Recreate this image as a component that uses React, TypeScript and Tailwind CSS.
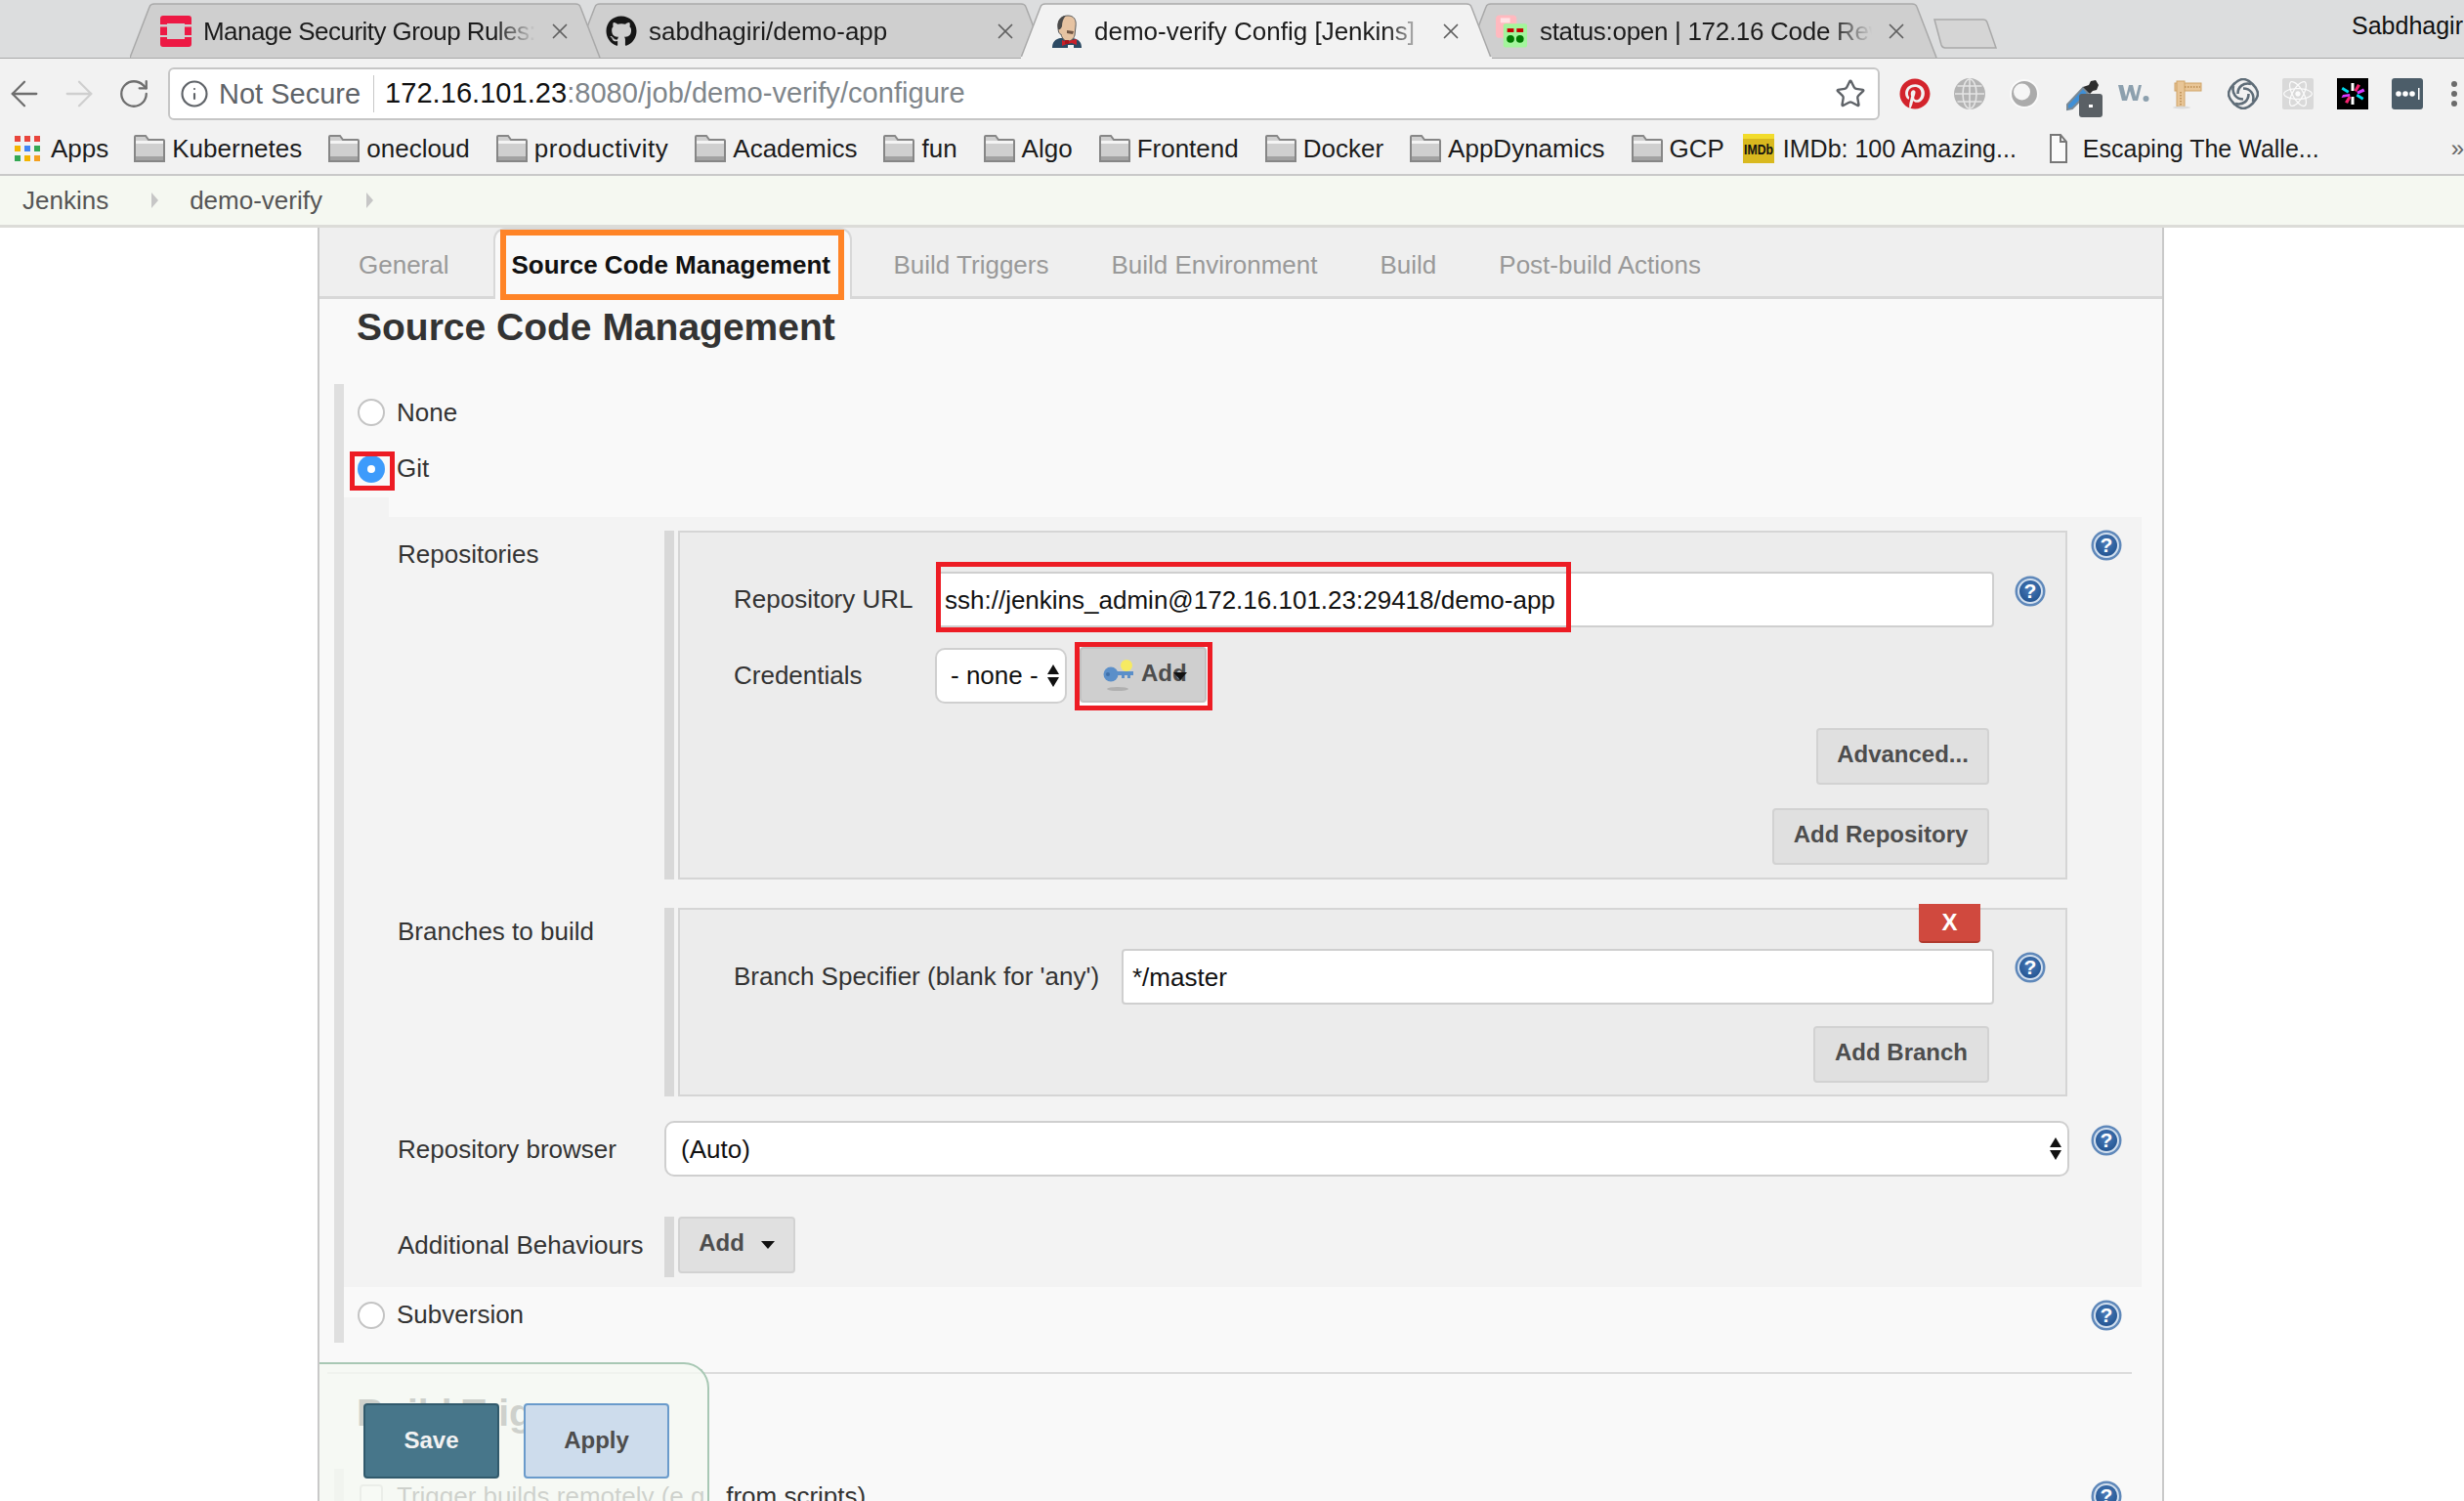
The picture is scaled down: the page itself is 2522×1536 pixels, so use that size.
import React from 'react';
import { ArrowLeft, ArrowRight, RotateCw, Info, Star, X } from 'lucide-react';
import { FaGithub, FaPinterest, FaReact } from 'react-icons/fa';

const OpenStackIcon = () => (
  <svg width="32" height="32" viewBox="0 0 32 32">
    <path d="M3 0h26a3 3 0 0 1 3 3v6H25V8H7v1H0V3a3 3 0 0 1 3-3z" fill="#ed1944" />
    <path d="M0 11.500h7V20H0zM25 11.500h7V20h-7z" fill="#ed1944" />
    <path d="M0 22h7v2h18v-2h7v7a3 3 0 0 1-3 3H3a3 3 0 0 1-3-3z" fill="#ed1944" />
  </svg>
);

const JenkinsIcon = () => (
  <svg width="32" height="34" viewBox="0 0 32 34">
    <path d="M1 34c0-6 3-9 8-10l13 0c6 1 9 4 9 10z" fill="#2c4a63" />
    <path d="M7 13C6 5 11 1 17 1c6 0 9 4 8 11l-1 9c-1 4-4 6-7 6-4 0-6-3-7-7-2 0-3-3-3-7z" fill="#e6c3a2" stroke="#5a5a5a" strokeWidth="1" />
    <path d="M7 15C5 7 10 1 15 1c-3 3-4 7-4 11-1 2-2 4-4 3z" fill="#4a4a4a" />
    <path d="M16 16l7 1-1 3-6-1z" fill="#6f5443" />
    <path d="M11 26l5 2 5-2 5-1v6l-5-2-5 1-5 2z" fill="#c8202a" />
    <rect x="14" y="26" width="4" height="4" fill="#a3161e" />
    <path d="M17 31h6v3h-6z" fill="#f2f2f2" />
  </svg>
);

const GerritIcon = () => (
  <svg width="34" height="34" viewBox="0 0 34 34">
    <rect x="0" y="0" width="22" height="24" rx="4" fill="#ffb9bf" />
    <rect x="5" y="3" width="10" height="5" fill="#ffe2e4" />
    <rect x="8" y="9" width="25" height="25" rx="2" fill="#a3f59c" />
    <rect x="12" y="14" width="7" height="4" fill="#c40000" />
    <rect x="22" y="14" width="7" height="4" fill="#c40000" />
    <circle cx="15.500" cy="25" r="4" fill="#007a00" />
    <circle cx="25.500" cy="25" r="4" fill="#007a00" />
  </svg>
);

const tabs = [
  { title: 'Manage Security Group Rules: ', icon: <OpenStackIcon />, z: 'z-30', active: false, tracking: 'tracking-[-0.55px]' },
  { title: 'sabdhagiri/demo-app', icon: <FaGithub size={32} color="#161616" />, z: 'z-20', active: false, tracking: '' },
  { title: 'demo-verify Config [Jenkins]', icon: <JenkinsIcon />, z: 'z-40', active: true, tracking: '' },
  { title: 'status:open | 172.16 Code Review', icon: <GerritIcon />, z: 'z-10', active: false, tracking: 'tracking-[-0.3px]' },
];

const Tab = ({ title, icon, z, active, tracking }: { title: string; icon: React.ReactNode; z: string; active: boolean; tracking: string }) => (
  <div className={`relative flex h-[57px] w-[482px] shrink-0 items-center pl-[30px] -ml-[26px] first:ml-0 ${z}`}>
    <svg className="absolute left-0 top-0" width="482" height="57" viewBox="0 0 482 57">
      <path
        d="M0 56 L20 4 Q21 1 25 1 L456 1 Q460 1 461 4 L481 56"
        fill={active ? '#f2f2f2' : '#cfcfcf'}
        stroke="#a9a9a9"
        strokeWidth="1.5"
      />
      {active && <rect x="0" y="55" width="482" height="2" fill="#f2f2f2" />}
    </svg>
    <span className="relative flex h-[34px] w-[33px] shrink-0 items-center justify-center">{icon}</span>
    <span className={`relative ml-[12px] w-[340px] overflow-hidden whitespace-nowrap text-[26px] leading-[34px] text-[#1c1c1c] [mask-image:linear-gradient(to_right,black_88%,transparent)] ${tracking}`}>
      {title}
    </span>
    <X className="relative ml-[12px] shrink-0 text-[#5f5f5f]" size={26} strokeWidth={1.6} />
  </div>
);

const Folder = () => (
  <svg width="32" height="28" viewBox="0 0 32 28" className="shrink-0">
    <path d="M1 27V2a1 1 0 0 1 1-1h10l3 4h15a1 1 0 0 1 1 1v21z" fill="#cfcfcf" stroke="#868686" strokeWidth="2" />
    <path d="M2 6h28v3H2z" fill="#f4f4f4" />
    <path d="M2 22h28v4H2z" fill="#a2a2a2" />
  </svg>
);

const AppsIcon = () => (
  <svg width="28" height="28" viewBox="0 0 28 28" className="shrink-0">
    {['#e8453c', '#e8453c', '#e8453c', '#f4b400', '#4285f4', '#34a853', '#34a853', '#f4b400', '#f4a020'].map((c, i) => (
      <rect key={i} x={(i % 3) * 10 + 1} y={Math.floor(i / 3) * 10 + 1} width="6" height="6" fill={c} />
    ))}
  </svg>
);

const ImdbIcon = () => (
  <svg width="32" height="30" viewBox="0 0 32 30" className="shrink-0">
    <rect width="32" height="30" fill="#d9b91f" />
    <rect width="32" height="5" fill="#f2dc2c" />
    <text x="1" y="21" fontSize="15" fontWeight="700" fontFamily="Liberation Sans" textLength="30" lengthAdjust="spacingAndGlyphs" fill="#111">
      IMDb
    </text>
  </svg>
);

const DocIcon = () => (
  <svg width="20" height="30" viewBox="0 0 20 30" className="shrink-0">
    <path d="M2 1h10l6 7v21H2z" fill="#fafafa" stroke="#777" strokeWidth="2" />
    <path d="M12 1v7h6" fill="none" stroke="#777" strokeWidth="2" />
  </svg>
);

const bookmarks = ['Kubernetes', 'onecloud', 'productivity', 'Academics', 'fun', 'Algo', 'Frontend', 'Docker', 'AppDynamics', 'GCP'];

const Bookmark = ({ icon, label, gap = 'gap-[7px]', text = 'text-[26px]' }: { icon: React.ReactNode; label: string; gap?: string; text?: string }) => (
  <div className={`flex items-center ${gap}`}>
    {icon}
    <span className={`${text} leading-none text-[#1c1c1c] ${label === 'productivity' ? 'tracking-[0.5px]' : ''}`}>{label}</span>
  </div>
);

const Extensions = () => (
  <div className="ml-[20px] flex items-center gap-[24px]">
    <FaPinterest size={32} color="#d3242c" className="shrink-0" />
    <svg width="32" height="32" viewBox="0 0 32 32" className="shrink-0">
      <circle cx="16" cy="16" r="16" fill="#b4b4b4" />
      <g fill="none" stroke="#e4e4e4" strokeWidth="1.6">
        <ellipse cx="16" cy="16" rx="7" ry="15" />
        <path d="M16 0v32M1 16h30M3.500 8h25M3.500 24h25" />
      </g>
    </svg>
    <svg width="32" height="32" viewBox="0 0 32 32" className="shrink-0">
      <circle cx="16" cy="16" r="14" fill="#ababab" stroke="#fafafa" strokeWidth="2" />
      <circle cx="13.500" cy="14" r="8.500" fill="#f6f6f6" />
    </svg>
    <div className="relative h-[32px] w-[32px] shrink-0">
      <svg className="absolute left-0 top-[-1px] overflow-visible" width="44" height="44" viewBox="0 0 44 44">
        <path d="M4 28l16-17 5 5L9 32l-5 1z" fill="#3f8fd6" stroke="#7b8a96" strokeWidth="2" />
        <path d="M20 10l7 7 3-3 4-1 2-5-3-5-5 1-2 4z" fill="#2e2e2e" />
        <rect x="16" y="17" width="24" height="24" rx="3" fill="#5a6065" />
        <rect x="26" y="28" width="4" height="3" fill="#fff" />
      </svg>
    </div>
    <svg width="32" height="24" viewBox="0 0 32 24" className="shrink-0">
      <path d="M0 3h5l3 12 3-12h4l3 12 3-12h3l-4 16h-5l-3-10-3 10H4z" fill="#8ca0ae" />
      <circle cx="28.500" cy="17" r="3" fill="#8ca0ae" />
    </svg>
    <svg width="32" height="32" viewBox="0 0 32 32" className="shrink-0">
      <rect x="2" y="5" width="27" height="8" fill="#e8c596" stroke="#d0a468" />
      <rect x="4" y="3" width="8" height="26" fill="#e8c596" stroke="#d0a468" />
      <path d="M12 9h16M8 14v14" stroke="#b98a50" strokeWidth="1.500" strokeDasharray="1.500 1.500" />
      <ellipse cx="9" cy="30" rx="9" ry="1.500" fill="#dcdcdc" />
    </svg>
    <svg width="32" height="32" viewBox="0 0 32 32" fill="none" stroke="#5f6d78" strokeWidth="2.600" className="shrink-0">
      <path d="M16 1C22 1 31 10 31 16C31 22 22 31 16 31C10 31 1 22 1 16C1 10 10 1 16 1z" />
      <path d="M10.500 16C10.500 9 16 4 24 6" />
      <path d="M21.500 16C21.500 23 16 28 8 26" />
      <path d="M16 10.500C23 10.500 28 16 26 24" />
      <path d="M16 21.500C9 21.500 4 16 6 8" />
    </svg>
    <div className="flex h-[32px] w-[32px] shrink-0 items-center justify-center rounded-[2px] bg-[#d9d9d9]">
      <FaReact size={30} color="#fbfbfb" />
    </div>
    <svg width="32" height="32" viewBox="0 0 32 32" className="shrink-0">
      <rect width="32" height="32" fill="#000" />
      <path d="M14.500 5h3v8h-3zM14.500 19h3v8h-3z" fill="#fff" />
      <path d="M21 6l3 1.500-4 6.500-2.500-1.500zM11 26l-3-1.500 4-6.500 2.500 1.500z" fill="#f5236f" />
      <path d="M27 10.500l1.500 3-7 3-1.200-2.700z" fill="#d63aff" />
      <path d="M27.500 20l-1.500 2.500-6.500-4 1.500-2.500z" fill="#00d8ea" />
      <path d="M4.500 20l1.500-3 7-1 .5 2.500z" fill="#d63aff" />
      <path d="M4.500 11.500l1.500-2.500 6.500 4-1.500 2.500z" fill="#00d8ea" />
    </svg>
    <svg width="32" height="32" viewBox="0 0 32 32" className="shrink-0">
      <rect width="32" height="32" rx="3" fill="#4c5d69" />
      <circle cx="7" cy="16" r="2.800" fill="#fff" />
      <circle cx="14" cy="16" r="2.800" fill="#fff" />
      <circle cx="21" cy="16" r="2.800" fill="#fff" />
      <rect x="27" y="10" width="1.500" height="12" fill="#fff" />
    </svg>
    <svg width="16" height="32" viewBox="0 0 16 32" className="shrink-0">
      <circle cx="8" cy="6" r="3" fill="#6b6b6b" />
      <circle cx="8" cy="16" r="3" fill="#6b6b6b" />
      <circle cx="8" cy="26" r="3" fill="#6b6b6b" />
    </svg>
  </div>
);

const BrowserChrome = () => (
  <div className="shrink-0">
    {/* tab strip */}
    <div className="flex h-[60px] items-start border-b-[1px] border-[#a9a9a9] bg-[#dcddde] pl-[133px] pt-[3px]">
      {tabs.map((t) => (
        <Tab key={t.title} {...t} />
      ))}
      <svg className="-ml-[4px] mt-[16px] shrink-0" width="66" height="32" viewBox="0 0 66 32">
        <path d="M1 1h50q3 0 4 3l9 26H12q-3 0-4-3z" fill="#d5d5d5" stroke="#a9a9a9" strokeWidth="1.500" />
      </svg>
      <div className="ml-auto mt-[6px] w-[115px] overflow-hidden whitespace-nowrap text-[25px] leading-[34px] text-[#111]">Sabdhagiri</div>
    </div>
    {/* toolbar */}
    <div className="flex h-[68px] items-start bg-[#f2f2f2] pl-[4px] pt-[9px]">
      <div className="flex h-[54px] items-center gap-[14px]">
        <ArrowLeft size={42} strokeWidth={1.3} className="text-[#6e6e6e]" />
        <ArrowRight size={42} strokeWidth={1.3} className="text-[#cfcfcf]" />
        <div className="flex w-[42px] justify-center">
          <RotateCw size={34} strokeWidth={1.6} className="text-[#6e6e6e]" />
        </div>
      </div>
      <div className="ml-[14px] flex h-[54px] w-[1752px] items-center rounded-[6px] border-2 border-[#c6c6c6] bg-white pl-[12px] pr-[12px]">
        <Info size={30} strokeWidth={1.7} className="-ml-[2px] text-[#5f6368]" />
        <span className="ml-[10px] text-[29px] leading-none text-[#5f6368]">Not Secure</span>
        <span className="ml-[13px] h-[38px] w-[1px] bg-[#c8c8c8]" />
        <span className="ml-[11px] text-[29.100px] leading-none text-[#111]">
          172.16.101.23<span className="text-[#80868b]">:8080/job/demo-verify/configure</span>
        </span>
        <Star size={32} strokeWidth={1.8} className="ml-auto text-[#5f6368]" />
      </div>
      <div className="flex h-[54px] items-center">
        <Extensions />
      </div>
    </div>
    {/* bookmarks */}
    <div className="flex h-[52px] items-center gap-[27px] border-b-2 border-[#c9c9c9] bg-[#f2f2f2] pb-[2px] pl-[14px]">
      <div className="-mr-[1px]">
        <Bookmark icon={<AppsIcon />} label="Apps" gap="gap-[10px]" />
      </div>
      {bookmarks.map((b) => (
        <Bookmark key={b} icon={<Folder />} label={b} />
      ))}
      <div className="-ml-[8px]">
        <Bookmark icon={<ImdbIcon />} label="IMDb: 100 Amazing..." gap="gap-[9px]" text="text-[25px]" />
      </div>
      <div className="ml-[6px]">
        <Bookmark icon={<DocIcon />} label="Escaping The Walle..." gap="gap-[15px]" text="text-[25px]" />
      </div>
      <span className="ml-auto text-[24px] leading-none text-[#666]">»</span>
    </div>
  </div>
);

const Crumb = () => <span className="block h-0 w-0 border-y-[8px] border-l-[7px] border-y-transparent border-l-[#c6c6c6]" />;

const Breadcrumb = () => (
  <div className="flex h-[53px] shrink-0 items-center border-b-[3px] border-[#dcdcd8] bg-[#f5f8f1] pl-[23px] text-[26px] leading-none text-[#555]">
    <span>Jenkins</span>
    <span className="ml-[44px]">
      <Crumb />
    </span>
    <span className="ml-[32px]">demo-verify</span>
    <span className="ml-[45px]">
      <Crumb />
    </span>
  </div>
);

const Help = ({ className = '' }: { className?: string }) => (
  <svg width="32" height="32" viewBox="0 0 32 32" className={`shrink-0 ${className}`}>
    <defs>
      <radialGradient id="helpBlue" cx="50%" cy="40%" r="60%">
        <stop offset="0%" stopColor="#4a7cba" />
        <stop offset="100%" stopColor="#245592" />
      </radialGradient>
    </defs>
    <circle cx="16" cy="16" r="15.500" fill="#5f88ba" />
    <circle cx="16" cy="16" r="13" fill="#d3e0ef" />
    <circle cx="16" cy="16" r="11" fill="url(#helpBlue)" />
    <text x="16" y="23" textAnchor="middle" fontSize="21" fontWeight="700" fontFamily="Liberation Sans" fill="#fff">
      ?
    </text>
  </svg>
);

const Radio = ({ checked = false }: { checked?: boolean }) =>
  checked ? (
    <span className="flex h-[28px] w-[28px] shrink-0 items-center justify-center rounded-full bg-[#3d9bfb]">
      <span className="h-[8px] w-[8px] rounded-full bg-white" />
    </span>
  ) : (
    <span className="block h-[28px] w-[28px] shrink-0 rounded-full border-2 border-[#c4c4c4] bg-white" />
  );

const GrayButton = ({ children, className = '' }: { children: React.ReactNode; className?: string }) => (
  <div className={`flex h-[58px] items-center justify-center rounded-[4px] border-2 border-[#d2d2d2] bg-[#e0e0e0] pb-[4px] text-[24px] font-bold leading-none text-[#4d4d4d] ${className}`}>
    {children}
  </div>
);

const SelectArrows = () => (
  <span className="flex flex-col gap-[3px]">
    <span className="h-0 w-0 border-x-[6px] border-b-[10px] border-x-transparent border-b-[#111]" />
    <span className="h-0 w-0 border-x-[6px] border-t-[10px] border-x-transparent border-t-[#111]" />
  </span>
);

const Caret = () => <span className="mt-[3px] h-0 w-0 border-x-[7px] border-t-[8px] border-x-transparent border-t-[#111]" />;

const TextBox = ({ children, className = '' }: { children?: React.ReactNode; className?: string }) => (
  <div className={`flex h-[57px] items-center rounded-[4px] border-2 border-[#cfcfcf] bg-white px-[7px] text-[26px] leading-none text-[#111] ${className}`}>
    {children}
  </div>
);

const Label = ({ children, className = '' }: { children: React.ReactNode; className?: string }) => (
  <div className={`text-[26px] leading-none text-[#333] ${className}`}>{children}</div>
);

const KeyIcon = () => (
  <svg width="32" height="34" viewBox="0 0 32 34" className="shrink-0">
    <circle cx="24" cy="7" r="6" fill="#f6ea62" />
    <ellipse cx="15" cy="31" rx="11" ry="2" fill="#b0b0b0" />
    <circle cx="8" cy="16" r="7.500" fill="#5b8fc9" />
    <path d="M12 13h19v4h-3v3h-3v-3h-3v3h-3v-3h-7z" fill="#5b8fc9" />
    <circle cx="5" cy="16" r="2" fill="#3f6fa8" />
  </svg>
);

const RepositoryBlock = () => (
  <div className="flex">
    <div className="w-[10px] bg-[#d8d8d8]" />
    <div className="ml-[4px] flex h-[357px] w-[1422px] flex-col border-2 border-[#d5d5d5] bg-[#ececec] pl-[55px] pr-[20px] pt-[40px]">
      <div className="flex items-start">
        <Label className="mt-[15px] w-[207px]">Repository URL</Label>
        <div className="relative w-[1083px]">
          <TextBox>ssh://jenkins_admin@172.16.101.23:29418/demo-app</TextBox>
          <div className="absolute -top-[10px] left-0 h-[72px] w-[650px] border-[5px] border-[#ed1c24]" />
        </div>
        <Help className="ml-[21px] mt-[4px]" />
      </div>
      <div className="mt-[16px] flex items-start">
        <Label className="mt-[20px] w-[206px]">Credentials</Label>
        <div className="mt-[5px] flex h-[57px] w-[135px] items-center justify-between rounded-[10px] border-2 border-[#cfcfcf] bg-white pb-[1px] pl-[14px] pr-[6px] text-[26px] leading-none text-[#111]">
          - none -
          <SelectArrows />
        </div>
        <div className="-mt-[1px] ml-[8px] h-[70px] w-[141px] border-[5px] border-[#ed1c24] bg-white">
          <div className="relative flex h-[57px] w-[130px] items-center rounded-[4px] border-2 border-[#c2c2c2] bg-[#cfcfcf] pl-[22px] text-[24px] font-bold leading-none text-[#4d4d4d]">
            <KeyIcon />
            <span className="ml-[7px] -mt-[3px]">Add</span>
            <span className="absolute left-[94px] top-[24px] h-0 w-0 border-x-[7px] border-t-[8px] border-x-transparent border-t-[#111]" />
          </div>
        </div>
      </div>
      <div className="mt-[18px] flex justify-end pr-[58px]">
        <GrayButton className="w-[177px]">Advanced...</GrayButton>
      </div>
      <div className="mt-[24px] flex justify-end pr-[58px]">
        <GrayButton className="w-[222px]">Add Repository</GrayButton>
      </div>
    </div>
  </div>
);

const BranchBlock = () => (
  <div className="flex">
    <div className="w-[10px] bg-[#d8d8d8]" />
    <div className="relative ml-[4px] flex h-[193px] w-[1422px] flex-col border-2 border-[#d5d5d5] bg-[#ececec] pl-[55px] pr-[20px] pt-[40px]">
      <div className="absolute -top-[6px] right-[87px] flex h-[40px] w-[63px] items-center justify-center rounded-b-[4px] border-b-2 border-[#b03a2e] bg-[#d0493e] text-[24px] font-bold leading-none text-white">
        X
      </div>
      <div className="flex items-start">
        <Label className="mt-[15px] w-[397px] whitespace-nowrap">Branch Specifier (blank for 'any')</Label>
        <TextBox className="w-[893px] pl-[9px]">*/master</TextBox>
        <Help className="ml-[21px] mt-[3px]" />
      </div>
      <div className="mt-[22px] flex justify-end pr-[58px]">
        <GrayButton className="w-[180px]">Add Branch</GrayButton>
      </div>
    </div>
  </div>
);

const GitRow = ({ label, labelClass, help, helpClass, children }: { label: string; labelClass: string; help?: boolean; helpClass?: string; children: React.ReactNode }) => (
  <div className="flex items-start">
    <Label className={`w-[328px] pl-[55px] ${labelClass}`}>{label}</Label>
    <div className="w-[1438px]">{children}</div>
    {help && <Help className={`ml-[22px] ${helpClass ?? ''}`} />}
  </div>
);

const GitSection = () => (
  <div>
    <div className="h-[20px] w-[46px] bg-[#f3f3f3]" />
    <div className="flex h-[788px] w-[1840px] flex-col bg-[#f3f3f3] pt-[14px]">
      <GitRow label="Repositories" labelClass="mt-[11px]" help helpClass="-mt-[1px]">
        <RepositoryBlock />
      </GitRow>
      <div className="mt-[29px]">
        <GitRow label="Branches to build" labelClass="mt-[11px]">
          <BranchBlock />
        </GitRow>
      </div>
      <div className="mt-[25px]">
        <GitRow label="Repository browser" labelClass="mt-[16px]" help helpClass="mt-[4px]">
          <TextBox className="w-[1438px] justify-between rounded-[10px] pl-[15px] pr-[6px]">
            (Auto)
            <SelectArrows />
          </TextBox>
        </GitRow>
      </div>
      <div className="mt-[41px]">
        <GitRow label="Additional Behaviours" labelClass="mt-[16px]">
          <div className="flex">
            <div className="h-[62px] w-[10px] bg-[#d8d8d8]" />
            <GrayButton className="ml-[4px] w-[120px] gap-[17px]">
              Add
              <Caret />
            </GrayButton>
          </div>
        </GitRow>
      </div>
    </div>
  </div>
);

const SaveBar = () => (
  <div className="absolute bottom-0 left-0 z-10 flex h-[142px] w-[399px] items-start gap-[25px] rounded-tr-[26px] border-r-2 border-t-2 border-[#a8c8b4] bg-[#f5f9f3]/80 pl-[45px] pt-[40px]">
    <div className="flex h-[77px] w-[139px] items-center justify-center rounded-[4px] border-2 border-[#315a6c] bg-[#47768a] pb-[2px] text-[24px] font-bold leading-none text-[#f2f2f2]">
      Save
    </div>
    <div className="flex h-[77px] w-[149px] items-center justify-center rounded-[4px] border-2 border-[#6a9bcb] bg-[#cddcec] pb-[2px] text-[24px] font-bold leading-none text-[#4d4d4d]">
      Apply
    </div>
  </div>
);

const ConfigTabs = () => (
  <div className="flex h-[73px] items-end border-b-[3px] border-[#d8d8d8] bg-[#efefef] text-[26px] leading-none text-[#999]">
    <div className="flex h-full items-center pl-[40px] pr-[40px] pt-[6px]">General</div>
    <div className="relative -mb-[3px] ml-[5px] flex h-[73px] w-[367px] items-center rounded-t-[12px] border-x-2 border-t-2 border-[#d8d8d8] bg-[#f9f9f9] pl-[17px] font-bold text-[#111]">
      Source Code Management
      <div className="absolute left-[5px] top-0 h-[72px] w-[352px] border-[6px] border-[#ff8427]" />
    </div>
    <div className="ml-[43px] flex h-full items-center gap-[64px] pt-[6px]">
      <span>Build Triggers</span>
      <span>Build Environment</span>
      <span>Build</span>
      <span>Post-build Actions</span>
    </div>
  </div>
);

const ConfigPanel = () => (
  <div className="relative ml-[325px] h-full w-[1890px] overflow-hidden border-x-2 border-[#c9c9c9] bg-[#f9f9f9]">
    <ConfigTabs />
    <h2 className="flex h-[60px] items-center pb-[3px] pl-[38px] text-[39px] font-bold leading-none text-[#333]">Source Code Management</h2>
    {/* section body, left rule runs the full height */}
    <div className="mt-[27px] ml-[15px] h-[981px] border-l-[10px] border-[#dfdfdf]">
      <div className="flex h-[58px] items-center gap-[12px] pl-[14px]">
        <Radio />
        <Label>None</Label>
      </div>
      <div className="flex h-[58px] items-center gap-[12px] pl-[14px]">
        <div className="relative">
          <Radio checked />
          <div className="absolute -left-[8px] -top-[4px] h-[40px] w-[46px] border-[5px] border-[#ed1c24]" />
        </div>
        <Label className="-mt-[2px]">Git</Label>
      </div>
      <GitSection />
      <div className="flex h-[57px] w-[1820px] items-center gap-[12px] pl-[14px]">
        <Radio />
        <Label className="-mt-[1px]">Subversion</Label>
        <Help className="ml-auto" />
      </div>
    </div>
    <div className="ml-[8px] mt-[30px] h-[2px] w-[1847px] bg-[#dcdcdc]" />
    <h2 className="mt-[18px] pl-[38px] text-[39px] font-bold leading-[44px] text-[#333]">Build Triggers</h2>
    <div className="ml-[15px] mt-[35px] flex h-[56px] w-[1830px] items-center gap-[14px] border-l-[10px] border-[#dfdfdf] pl-[16px]">
      <span className="h-[24px] w-[24px] shrink-0 rounded-[4px] border-2 border-[#c4c4c4] bg-white" />
      <Label>Trigger builds remotely (e.g., from scripts)</Label>
      <Help className="ml-auto" />
    </div>
    <SaveBar />
  </div>
);

const App = () => {
  return (
    <div className="flex h-[1536px] w-[2522px] flex-col overflow-hidden bg-white font-['Liberation_Sans',Arial,sans-serif]">
      <BrowserChrome />
      <Breadcrumb />
      <div className="min-h-0 flex-1">
        <ConfigPanel />
      </div>
    </div>
  );
};

export default App;
